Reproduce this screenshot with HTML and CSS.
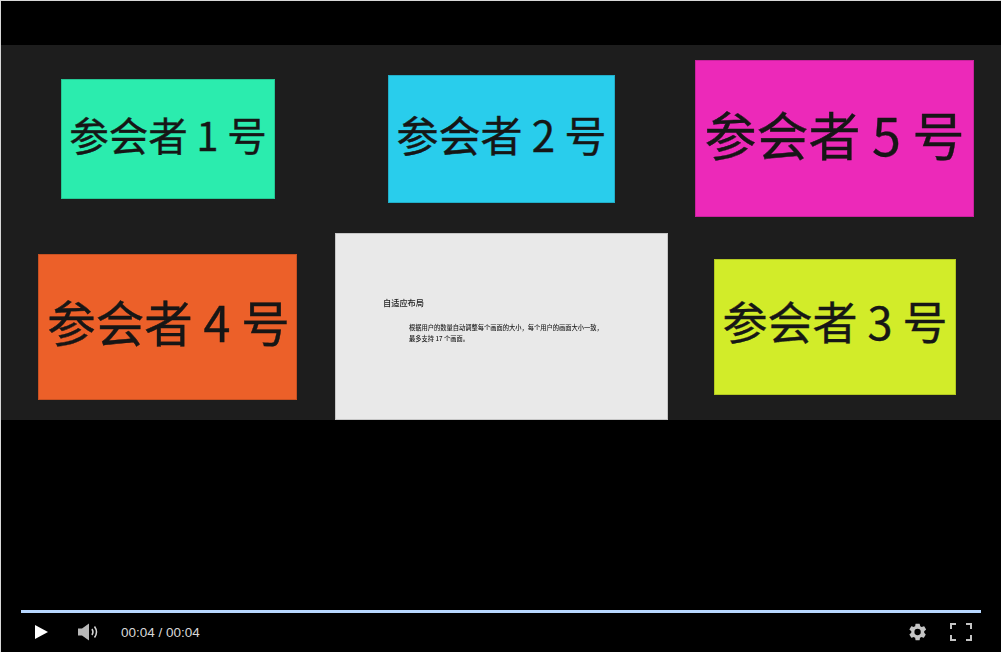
FILE: index.html
```html
<!DOCTYPE html>
<html lang="zh-CN">
<head>
    <meta charset="UTF-8">
    <title>自适应布局</title>
    <link rel="stylesheet" href="styles.css">
</head>
<body>
    <div class="player">
        <div class="video">
            <div class="stage">
                <div class="tile tile-1">参会者 1 号</div>
                <div class="tile tile-2">参会者 2 号</div>
                <div class="tile tile-5">参会者 5 号</div>
                <div class="tile tile-4">参会者 4 号</div>
                <div class="tile tile-3">参会者 3 号</div>
                <div class="slide">
                    <div class="slide-title">自适应布局</div>
                    <p class="slide-text">根据用户的数量自动调整每个画面的大小，每个用户的画面大小一致，<br>最多支持 17 个画面。</p>
                </div>
            </div>
        </div>
        <div class="progress"></div>
        <div class="controls">
            <svg class="icon icon-play" width="16" height="16" viewBox="0 0 16 16"><path d="M2 1 L15 8 L2 15 Z" fill="#fff"/></svg>
            <svg class="icon icon-volume" width="21" height="20" viewBox="0 0 21 20">
                <path d="M0 6.500 H4 L11 1.500 V18.500 L4 13.500 H0 Z" fill="#b8b8b8"/>
                <path d="M14 7 Q16 10 14 13" fill="none" stroke="#d8d8d8" stroke-width="1.500"/>
                <path d="M16.500 4.500 Q20.500 10 16.500 15.500" fill="none" stroke="#d8d8d8" stroke-width="1.500"/>
            </svg>
            <span class="time">00:04 / 00:04</span>
            <span class="spacer"></span>
            <svg class="icon icon-gear" width="20" height="20" viewBox="0 0 24 24"><path fill="#c4c4c4" fill-rule="evenodd" d="M19.400 13c.1-.3.100-.7.100-1s0-.7-.1-1l2.100-1.600c.2-.2.300-.4.100-.6l-2-3.500c-.1-.2-.4-.3-.6-.2l-2.500 1c-.5-.4-1.100-.7-1.700-1L14 2.400c0-.2-.2-.4-.5-.4h-4c-.2 0-.4.200-.5.400l-.4 2.700c-.6.200-1.100.6-1.700 1l-2.500-1c-.2-.1-.5 0-.6.200l-2 3.500c-.1.200-.1.500.1.600L4 11c0 .3-.1.700-.1 1s0 .7.100 1l-2.100 1.600c-.2.200-.3.400-.1.600l2 3.500c.1.200.4.300.6.200l2.500-1c.5.400 1.100.7 1.700 1l.4 2.700c0 .2.200.4.500.4h4c.2 0 .4-.2.500-.4l.4-2.700c.6-.2 1.100-.6 1.700-1l2.500 1c.2.100.5 0 .6-.2l2-3.500c.1-.2.100-.5-.1-.6L19.400 13zM11.500 15.800a3.800 3.800 0 1 1 0-7.600 3.800 3.800 0 0 1 0 7.600z"/></svg>
            <svg class="icon icon-full" width="22" height="18" viewBox="0 0 22 18">
                <path d="M1 6 V1 H6 M16 1 H21 V6 M21 12 V17 H16 M6 17 H1 V12" fill="none" stroke="#c4c4c4" stroke-width="2"/>
            </svg>
        </div>
    </div>
</body>
</html>
```

FILE: styles.css
```css
html, body {
    margin: 0;
    padding: 0;
    background: #000;
}

.player {
    width: 1001px;
    height: 652px;
    box-sizing: border-box;
    border-top: 1px solid #d8d8d8;
    border-left: 1px solid #d8d8d8;
    background: #000;
    display: flex;
    flex-direction: column;
}

.video {
    height: 609px;
    padding-top: 44px;
    box-sizing: border-box;
}

.stage {
    position: relative;
    height: 375px;
    background: #1d1d1d;
}

/* tiles sit freely on the recorded canvas */
.tile {
    position: absolute;
    box-sizing: border-box;
    display: flex;
    align-items: center;
    justify-content: center;
    white-space: pre;
    color: #161616;
    font-family: "Noto Sans CJK SC", sans-serif;
    font-weight: 400;
    -webkit-text-stroke: 0.4px #161616;
    box-shadow: inset 0 0 0 1px rgba(0, 0, 0, 0.15);
}

.tile-1 {
    left: 60px;
    top: 34px;
    width: 214px;
    height: 120px;
    padding-bottom: 11px;
    background: #2becae;
    font-size: 39.500px;
}

.tile-2 {
    left: 387px;
    top: 30px;
    width: 227px;
    height: 128px;
    padding-bottom: 11px;
    background: #29cdec;
    font-size: 42px;
}

.tile-5 {
    left: 694px;
    top: 15px;
    width: 279px;
    height: 157px;
    padding-bottom: 10px;
    background: #ec29b9;
    font-size: 52px;
}

.tile-4 {
    left: 37px;
    top: 209px;
    width: 259px;
    height: 146px;
    padding: 0 0 12px 2px;
    background: #ec6029;
    font-size: 48.500px;
}

.tile-3 {
    left: 713px;
    top: 214px;
    width: 242px;
    height: 136px;
    padding-bottom: 13px;
    background: #d2ec29;
    font-size: 45px;
}

.slide {
    position: absolute;
    left: 334px;
    top: 188px;
    width: 333px;
    height: 187px;
    box-sizing: border-box;
    padding: 63px 0 0 48px;
    background: #e9e9e9;
    box-shadow: inset 0 0 0 1px rgba(0, 0, 0, 0.15);
    color: #222;
    font-family: "Noto Sans CJK SC", sans-serif;
    font-weight: 500;
    filter: blur(0.3px);
}

.slide-title {
    font-size: 8.200px;
    line-height: 12px;
}

.slide-text {
    margin: 14px 0 0 26px;
    font-size: 6.250px;
    line-height: 11px;
    white-space: nowrap;
}

.progress {
    height: 3px;
    margin: 0 20px 0 20px;
    background: #b8d8ff;
}

.controls {
    display: flex;
    align-items: center;
    height: 38px;
    padding: 0 29px 0 32px;
}

.time {
    margin-left: 22px;
    color: #d8d8d8;
    font-family: "Liberation Sans", Arial, sans-serif;
    font-size: 13.500px;
}

.spacer {
    flex: 1;
}

.icon-volume {
    margin-left: 29px;
}

.icon-full {
    margin-left: 22px;
}
```
